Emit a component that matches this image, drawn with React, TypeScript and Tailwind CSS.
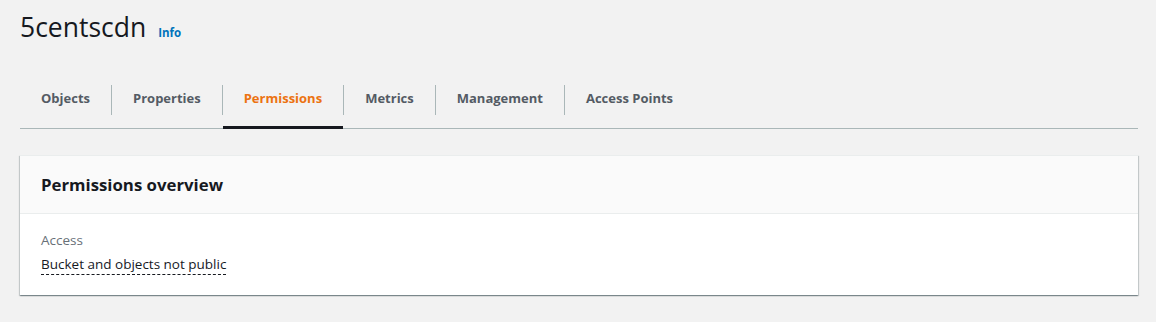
import React from 'react';

const TABS = ['Objects', 'Properties', 'Permissions', 'Metrics', 'Management', 'Access Points'];
const ACTIVE = 'Permissions';

export default function App() {
  return (
    <div className="min-h-[322px] w-full bg-[#f2f2f2] pl-5 pr-[18px] pt-[9px] font-['Open_Sans',sans-serif] text-[#16191f]">
      {/* header */}
      <div className="flex items-baseline gap-3">
        <h1 className="text-[26.5px] leading-[36px] font-normal text-[#16191f]">5centscdn</h1>
        <a className="text-[11.5px] font-bold text-[#0073bb]">Info</a>
      </div>

      {/* tabs */}
      <div className="mt-[26px] flex border-b border-[#aab7b8]">
        {TABS.map((t, i) => {
          const active = t === ACTIVE;
          return (
            <div key={t} className="flex items-center">
              {i > 0 && <div className="h-[30px] w-px bg-[#aab7b8]" />}
              <div
                className={
                  'flex h-[58px] items-center px-[21px] text-[13px] font-bold border-b-[3px] -mb-[1px] ' +
                  (active ? 'border-[#16191f] text-[#ec7211]' : 'border-transparent text-[#545b64]')
                }
              >
                {t}
              </div>
            </div>
          );
        })}
      </div>

      {/* card */}
      <div className="mt-[26px] bg-white border-t border-[#eaeded] shadow-[0_1px_1px_0_rgba(0,28,36,0.3),1px_1px_1px_0_rgba(0,28,36,0.15),-1px_1px_1px_0_rgba(0,28,36,0.15)]">
        <div className="flex h-[58px] items-center border-b border-[#eaeded] bg-[#fafafa] px-[21px]">
          <h2 className="text-[16.8px] font-bold text-[#16191f]">Permissions overview</h2>
        </div>
        <div className="px-[21px] pt-[15px] pb-[20px]">
          <div className="text-[13.5px] leading-[22px] text-[#687078]">Access</div>
          <div className="mt-[2px] text-[13.5px] leading-[22px] text-[#16191f]">
            <span className="border-b border-dashed border-[#16191f] pb-[1px]">Bucket and objects not public</span>
          </div>
        </div>
      </div>
    </div>
  );
}
